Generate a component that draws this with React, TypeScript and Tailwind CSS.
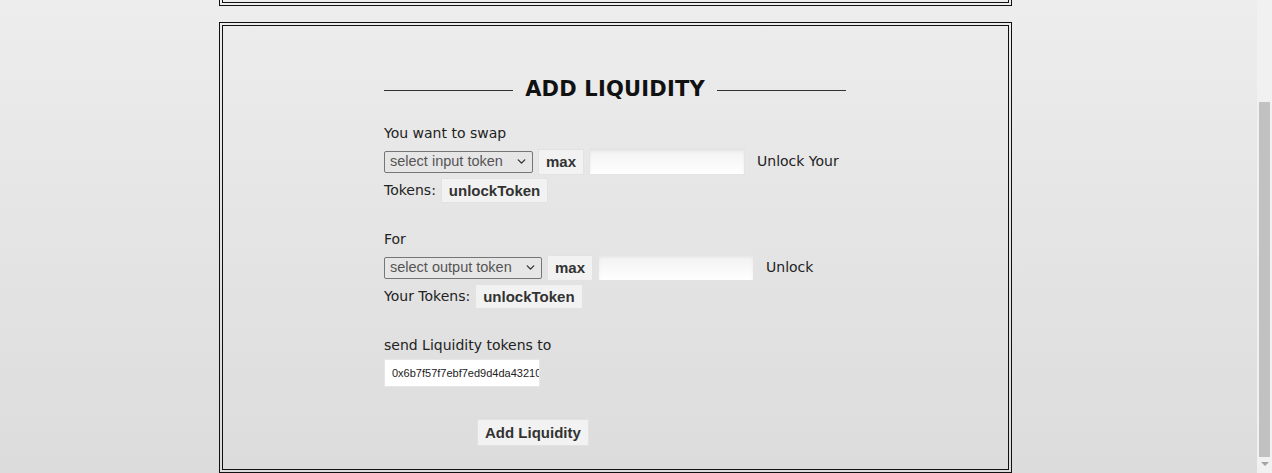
import { ChevronDown } from "lucide-react";

const sans = "font-['DejaVu_Sans',sans-serif]";
const arial = "font-['Liberation_Sans',Arial,sans-serif]";

function FakeSelect({ label, width }: { label: string; width: string }) {
  return (
    <div
      className={`${width} ${arial} h-[22px] flex items-center justify-between border border-[#767676] rounded-[2px] bg-[#e6e6e6] pl-[5px] pr-[4px] text-[14.5px] text-[#555]`}
    >
      <span className="leading-none">{label}</span>
      <ChevronDown size={13} strokeWidth={2.5} className="text-[#333]" />
    </div>
  );
}

function Btn({ children, className = "" }: { children: React.ReactNode; className?: string }) {
  return (
    <button
      className={`${arial} ${className} px-[7px] bg-[#f2f2f2] border border-[#e2e2e2] text-[15px] font-bold text-[#333] leading-none`}
    >
      {children}
    </button>
  );
}

function AmountInput() {
  return (
    <div className="w-[156px] h-[27px] bg-gradient-to-b from-[#f1f1f1] to-white border border-[#e4e4e4] shadow-[inset_0_2px_3px_rgba(0,0,0,0.06)]" />
  );
}

function TokenBlock({
  title,
  select,
  selectWidth,
  unlockFirst,
  unlockRest,
}: {
  title: string;
  select: string;
  selectWidth: string;
  unlockFirst: string;
  unlockRest: string;
}) {
  return (
    <div className="flex flex-col">
      <div className="h-[27px] flex items-center">{title}</div>
      <div className="h-[29px] flex items-center">
        <FakeSelect label={select} width={selectWidth} />
        <Btn className="ml-[5px] h-[26px]">max</Btn>
        <div className="ml-[5px]">
          <AmountInput />
        </div>
        <span className="ml-[12px]">{unlockFirst}</span>
      </div>
      <div className="h-[29px] flex items-center">
        <span>{unlockRest}</span>
        <Btn className="ml-[5px] h-[25px]">unlockToken</Btn>
      </div>
    </div>
  );
}

export default function App() {
  return (
    <div className="flex w-[1272px] h-[473px] overflow-hidden">
      <div className="flex-1 bg-gradient-to-b from-[#ededed] to-[#dcdcdc] flex flex-col">
        {/* tail of the panel above */}
        <div className="ml-[219px] w-[793px] h-[6px] border-x-4 border-b-4 border-double border-[#111]" />

        <div
          className={`${sans} mt-[16px] ml-[219px] w-[793px] h-[451px] border-4 border-double border-[#111] text-[14px] text-[#222]`}
        >
          <div className="w-[462px] ml-[161px] pt-[50px] flex flex-col">
            {/* Title */}
            <div className="h-[28px] flex items-center gap-[12px]">
              <div className="flex-1 h-px bg-[#333]" />
              <h2 className="text-[21px] font-bold text-[#111] tracking-[0.2px]">ADD LIQUIDITY</h2>
              <div className="flex-1 h-px bg-[#333]" />
            </div>

            <div className="mt-[16px]">
              <TokenBlock
                title="You want to swap"
                select="select input token"
                selectWidth="w-[149px]"
                unlockFirst="Unlock Your"
                unlockRest="Tokens:"
              />
            </div>

            <div className="mt-[21px]">
              <TokenBlock
                title="For"
                select="select output token"
                selectWidth="w-[158px]"
                unlockFirst="Unlock"
                unlockRest="Your Tokens:"
              />
            </div>

            <div className="mt-[21px] h-[27px] flex items-center">send Liquidity tokens to</div>
            <div
              className={`${arial} w-[156px] h-[28px] bg-white border border-[#e6e6e6] flex items-center pl-[7px] text-[11px] text-[#222] overflow-hidden whitespace-nowrap`}
            >
              0x6b7f57f7ebf7ed9d4da43210
            </div>

            <div className="mt-[32px] pl-[93px]">
              <Btn className="h-[27px]">Add Liquidity</Btn>
            </div>
          </div>
        </div>
      </div>

      {/* scrollbar */}
      <div className="w-[15px] h-full bg-[#f1f1f1] flex flex-col items-center">
        <div className="mt-[102px] w-[11px] h-[355px] bg-[#c1c1c1]" />
        <div className="mt-[5px] w-0 h-0 border-x-[4px] border-x-transparent border-t-[4px] border-t-[#a3a3a3]" />
      </div>
    </div>
  );
}
